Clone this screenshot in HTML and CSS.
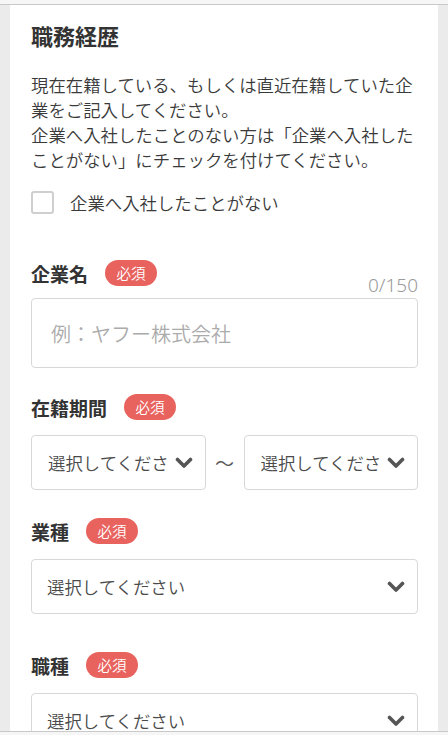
FILE: index.html
```html
<!DOCTYPE html>
<html lang="ja">
<head>
  <meta charset="UTF-8">
  <meta name="viewport" content="width=device-width, initial-scale=1.0">
  <title>職務経歴</title>
  <link rel="stylesheet" href="styles.css">
</head>
<body>

  <div class="top-bar"></div>

  <main class="page">
    <section class="card">
      <h2 class="card-title">職務経歴</h2>

      <p class="lead">現在在籍している、もしくは直近在籍していた企業をご記入してください。<br>企業へ入社したことのない方は「企業へ入社したことがない」にチェックを付けてください。</p>

      <label class="check-row">
        <span class="check-box"></span>
        <span class="check-text">企業へ入社したことがない</span>
      </label>

      <!-- 企業名 -->
      <div class="field field-company">
        <div class="field-head">
          <span class="field-label">企業名</span>
          <span class="badge">必須</span>
        </div>
        <div class="counter">0/150</div>
        <div class="text-input"><span class="placeholder">例：ヤフー株式会社</span></div>
      </div>

      <!-- 在籍期間 -->
      <div class="field field-period">
        <div class="field-head">
          <span class="field-label">在籍期間</span>
          <span class="badge">必須</span>
        </div>
        <div class="range">
          <div class="select">
            <span class="select-text">選択してください</span>
            <svg class="chevron" viewBox="0 0 18 12"><path d="M2.5 2.5 L9 9 L15.5 2.5"/></svg>
          </div>
          <span class="tilde">〜</span>
          <div class="select">
            <span class="select-text">選択してください</span>
            <svg class="chevron" viewBox="0 0 18 12"><path d="M2.5 2.5 L9 9 L15.5 2.5"/></svg>
          </div>
        </div>
      </div>

      <!-- 業種 -->
      <div class="field field-industry">
        <div class="field-head">
          <span class="field-label">業種</span>
          <span class="badge">必須</span>
        </div>
        <div class="select">
          <span class="select-text">選択してください</span>
          <svg class="chevron" viewBox="0 0 18 12"><path d="M2.5 2.5 L9 9 L15.5 2.5"/></svg>
        </div>
      </div>

      <!-- 職種 -->
      <div class="field field-job">
        <div class="field-head">
          <span class="field-label">職種</span>
          <span class="badge">必須</span>
        </div>
        <div class="select">
          <span class="select-text">選択してください</span>
          <svg class="chevron" viewBox="0 0 18 12"><path d="M2.5 2.5 L9 9 L15.5 2.5"/></svg>
        </div>
      </div>
    </section>
  </main>

  <div class="bottom-bar"></div>

</body>
</html>
```

FILE: styles.css
```css
body, html {
  margin: 0;
  padding: 0;
  height: 100%;
  overflow: hidden;
  font-family: 'Noto Sans CJK JP', 'Noto Sans', sans-serif;
  font-weight: 350;
  background-color: #ebebeb;
  color: #333;
}

body {
  display: flex;
  flex-direction: column;
}

.top-bar {
  height: 4px;
  background: #f6f6f6;
  border-bottom: 1px solid #c9c9c9;
  flex-shrink: 0;
}

.bottom-bar {
  height: 3px;
  background: #f6f6f6;
  border-top: 1px solid #c9c9c9;
  flex-shrink: 0;
}

.page {
  flex: 1;
  overflow: hidden;
  padding: 0 10px;
}

.card {
  background: #fff;
  padding: 15px 20px 40px 21px;
}

.card-title {
  margin: 0 0 22px;
  font-size: 22px;
  line-height: 30px;
  font-weight: 700;
  color: #333;
}

.lead {
  margin: 0;
  font-size: 17.4px;
  line-height: 25px;
  color: #3a3a3a;
}

.check-row {
  display: flex;
  align-items: center;
  gap: 16px;
  margin-top: 19px;
}

.check-box {
  width: 19px;
  height: 19px;
  border: 2px solid #cfcfcf;
  border-radius: 3px;
  background: #fff;
}

.check-text {
  font-size: 17.4px;
  line-height: 23px;
  color: #3a3a3a;
}

.field-head {
  display: flex;
  align-items: center;
  gap: 17px;
  height: 26px;
}

.field-label {
  font-size: 19px;
  font-weight: 700;
  color: #333;
}

.badge {
  width: 52px;
  height: 26px;
  line-height: 26px;
  border-radius: 13px;
  background: #e8625e;
  color: #fff;
  font-size: 14.5px;
  text-align: center;
}

.field-company { margin-top: 46px; }
.field-period { margin-top: 26px; }
.field-industry { margin-top: 28px; }
.field-job { margin-top: 38px; }

.counter {
  margin-top: -11px;
  line-height: 20px;
  text-align: right;
  font-family: 'Noto Sans', sans-serif;
  font-weight: 300;
  font-size: 19px;
  color: #9a9a9a;
}

.text-input {
  margin-top: 3px;
  height: 68px;
  border: 1px solid #d8d8d8;
  border-radius: 4px;
  display: flex;
  align-items: center;
  padding-left: 19px;
}

.placeholder {
  font-size: 20px;
  color: #ababab;
}

.range {
  display: flex;
  align-items: center;
  margin-top: 15px;
}

.range .select {
  flex: 1;
  margin-top: 0;
  padding-left: 16px;
}

.tilde {
  width: 38px;
  text-align: center;
  font-size: 19px;
  color: #555;
}

.select {
  margin-top: 15px;
  height: 53px;
  border: 1px solid #d8d8d8;
  border-radius: 4px;
  display: flex;
  align-items: center;
  gap: 6px;
  padding: 0 12px 0 15px;
  overflow: hidden;
}

.select-text {
  flex: 1;
  white-space: nowrap;
  overflow: hidden;
  font-size: 17.4px;
  color: #4a4a4a;
}

.chevron {
  width: 18px;
  height: 12px;
  flex-shrink: 0;
}

.chevron path {
  fill: none;
  stroke: #555;
  stroke-width: 3.6;
  stroke-linecap: round;
  stroke-linejoin: round;
}
```
